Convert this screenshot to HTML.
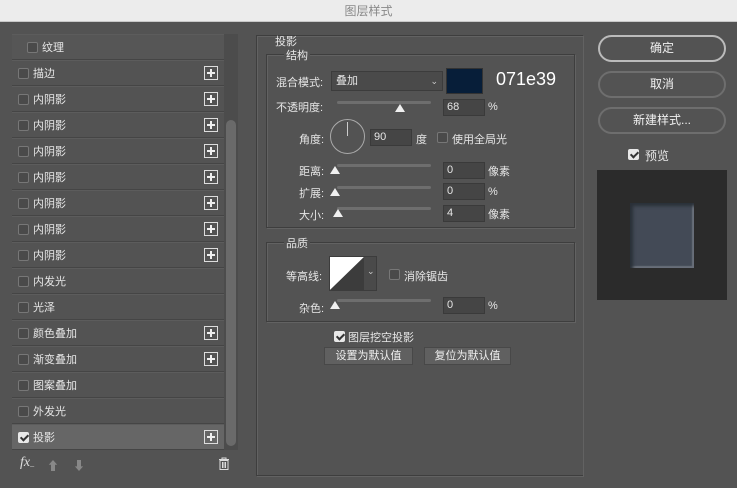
<!DOCTYPE html>
<html><head><meta charset="utf-8"><style>
*{box-sizing:border-box;margin:0;padding:0}
body{width:737px;height:488px;background:#535353;font-family:"Liberation Sans","Noto Sans CJK SC",sans-serif;font-size:11px;color:#e6e6e6;position:relative;overflow:hidden}
.a{position:absolute}
.title{left:0;top:0;width:737px;height:22px;background:#ececec;border-bottom:1px solid #c8c8c8;color:#888;text-align:center;line-height:22px;font-size:12px}
.list{left:12px;top:34px;width:212px;height:416px;background:#535353}
.row{position:absolute;left:0;width:212px;height:26px;border-bottom:1px solid #454545;border-top:1px solid #5c5c5c}
.row span{position:absolute;left:21px;top:4px}
.cb{position:absolute;width:11px;height:11px;border:1px solid #777;background:#4a4a4a;border-radius:2px}
.row .cb{left:6px;top:7px}
.plus{position:absolute;left:192px;top:5px;width:14px;height:14px;border:1px solid #ddd}
.plus:before{content:"";position:absolute;left:2px;top:5px;width:8px;height:2px;background:#eee}
.plus:after{content:"";position:absolute;left:5px;top:2px;width:2px;height:8px;background:#eee}
.chk{background:#e8e8e8;border-color:#e8e8e8}
.chk:after{content:"";position:absolute;left:3px;top:0px;width:3px;height:6px;border:solid #333;border-width:0 2px 2px 0;transform:rotate(45deg)}
.box{border:1px solid #3e3e3e;box-shadow:1px 1px 0 #626262, inset 1px 1px 0 #626262}
.inp{position:absolute;height:17px;background:#454545;border:1px solid #3a3a3a;padding-left:3px;line-height:15px;color:#e6e6e6}
.sl{position:absolute;height:3px;background:#6e6e6e;border-radius:2px;width:94px}
.th{position:absolute;width:0;height:0;border-left:5px solid transparent;border-right:5px solid transparent;border-bottom:8px solid #f0f0f0}
.lbl{position:absolute}
.btn{position:absolute;left:598px;width:128px;height:27px;border:2px solid #6e6e6e;border-radius:14px;text-align:center;line-height:23px;font-size:12px;color:#f0f0f0}
.btn2{position:absolute;height:18px;background:#606060;border:1px solid #484848;text-align:center;line-height:16px;color:#eee}
</style></head><body>
<div class="a title">图层样式</div>

<div class="a list">
<div class="row" style="top:0;background:#565656"><div class="cb" style="left:15px"></div><span style="left:30px">纹理</span></div>
<div class="row" style="top:26px"><div class="cb"></div><span>描边</span><div class="plus"></div></div>
<div class="row" style="top:52px"><div class="cb"></div><span>内阴影</span><div class="plus"></div></div>
<div class="row" style="top:78px"><div class="cb"></div><span>内阴影</span><div class="plus"></div></div>
<div class="row" style="top:104px"><div class="cb"></div><span>内阴影</span><div class="plus"></div></div>
<div class="row" style="top:130px"><div class="cb"></div><span>内阴影</span><div class="plus"></div></div>
<div class="row" style="top:156px"><div class="cb"></div><span>内阴影</span><div class="plus"></div></div>
<div class="row" style="top:182px"><div class="cb"></div><span>内阴影</span><div class="plus"></div></div>
<div class="row" style="top:208px"><div class="cb"></div><span>内阴影</span><div class="plus"></div></div>
<div class="row" style="top:234px"><div class="cb"></div><span>内发光</span></div>
<div class="row" style="top:260px"><div class="cb"></div><span>光泽</span></div>
<div class="row" style="top:286px"><div class="cb"></div><span>颜色叠加</span><div class="plus"></div></div>
<div class="row" style="top:312px"><div class="cb"></div><span>渐变叠加</span><div class="plus"></div></div>
<div class="row" style="top:338px"><div class="cb"></div><span>图案叠加</span></div>
<div class="row" style="top:364px"><div class="cb"></div><span>外发光</span></div>
<div class="row" style="top:390px;background:#666"><div class="cb chk"></div><span>投影</span><div class="plus"></div></div>
</div>
<div class="a" style="left:224px;top:34px;width:14px;height:416px;background:#4c4c4c"></div>
<div class="a" style="left:226px;top:120px;width:10px;height:326px;background:#6a6a6a;border-radius:5px"></div>
<div class="a" style="left:20px;top:455px;font-style:italic;font-size:14px;color:#ddd;font-family:'Liberation Serif',serif">fx<span style="font-size:8px">_</span></div>
<div class="a" style="left:47px;top:457px;color:#888;font-size:12px">⬆</div>
<div class="a" style="left:73px;top:457px;color:#888;font-size:12px">⬇</div>
<svg class="a" style="left:218px;top:457px" width="12" height="13" viewBox="0 0 12 13"><path d="M1 2.5h10M4 2.5V1h4v1.5M2 3.5h8v9H2z M4.5 5v6M6 5v6M7.5 5v6" stroke="#ddd" fill="none" stroke-width="1"/></svg>

<div class="a box" style="left:256px;top:35px;width:327px;height:441px;border-right:none"></div>
<div class="a" style="left:275px;top:33px">投影</div>
<div class="a box" style="left:266px;top:54px;width:309px;height:174px"></div>
<div class="a" style="left:284px;top:47px;background:#535353;padding:0 2px">结构</div>

<div class="lbl" style="left:276px;top:74px">混合模式:</div>
<div class="a" style="left:331px;top:71px;width:112px;height:20px;background:#4a4a4a;border:1px solid #3c3c3c;padding-left:4px;line-height:18px">叠加<span style="position:absolute;right:4px;top:0;font-size:9px;color:#ccc">⌄</span></div>
<div class="a" style="left:446px;top:68px;width:37px;height:26px;background:#071e39;border:1px solid #333"></div>
<div class="a" style="left:496px;top:69px;font-size:18px;color:#fff">071e39</div>

<div class="lbl" style="left:276px;top:99px">不透明度:</div>
<div class="sl" style="left:337px;top:101px"></div><div class="th" style="left:395px;top:104px"></div>
<div class="inp" style="left:443px;top:99px;width:42px">68</div><div class="lbl" style="left:488px;top:101px">%</div>

<div class="lbl" style="left:299px;top:131px">角度:</div>
<div class="a" style="left:330px;top:119px;width:35px;height:35px;border:1px solid #aaa;border-radius:50%"></div>
<div class="a" style="left:347px;top:122px;width:1px;height:14px;background:#ccc"></div>
<div class="inp" style="left:370px;top:129px;width:42px">90</div><div class="lbl" style="left:416px;top:131px">度</div>
<div class="cb" style="left:437px;top:132px"></div><div class="lbl" style="left:452px;top:131px">使用全局光</div>

<div class="lbl" style="left:299px;top:163px">距离:</div>
<div class="sl" style="left:337px;top:164px"></div><div class="th" style="left:330px;top:166px"></div>
<div class="inp" style="left:443px;top:162px;width:42px">0</div><div class="lbl" style="left:488px;top:163px">像素</div>
<div class="lbl" style="left:299px;top:185px">扩展:</div>
<div class="sl" style="left:337px;top:186px"></div><div class="th" style="left:330px;top:188px"></div>
<div class="inp" style="left:443px;top:183px;width:42px">0</div><div class="lbl" style="left:488px;top:186px">%</div>
<div class="lbl" style="left:299px;top:207px">大小:</div>
<div class="sl" style="left:337px;top:207px"></div><div class="th" style="left:333px;top:209px"></div>
<div class="inp" style="left:443px;top:205px;width:42px">4</div><div class="lbl" style="left:488px;top:206px">像素</div>

<div class="a box" style="left:266px;top:242px;width:309px;height:80px"></div>
<div class="a" style="left:284px;top:235px;background:#535353;padding:0 2px">品质</div>
<div class="lbl" style="left:286px;top:268px">等高线:</div>
<div class="a" style="left:329px;top:256px;width:48px;height:35px;border:1px solid #3c3c3c;background:#4a4a4a"></div>
<svg class="a" style="left:330px;top:257px" width="34" height="33"><polygon points="0,0 34,0 0,33" fill="#fff"/><polygon points="34,0 34,33 0,33" fill="#3c3c3c"/></svg>
<div class="a" style="left:367px;top:266px;font-size:9px;color:#ccc">⌄</div>
<div class="cb" style="left:389px;top:269px"></div><div class="lbl" style="left:404px;top:268px">消除锯齿</div>
<div class="lbl" style="left:299px;top:300px">杂色:</div>
<div class="sl" style="left:337px;top:299px"></div><div class="th" style="left:330px;top:301px"></div>
<div class="inp" style="left:443px;top:297px;width:42px">0</div><div class="lbl" style="left:488px;top:300px">%</div>

<div class="cb chk" style="left:334px;top:331px"></div><div class="lbl" style="left:348px;top:329px">图层挖空投影</div>
<div class="btn2" style="left:324px;top:347px;width:89px">设置为默认值</div>
<div class="btn2" style="left:424px;top:347px;width:87px">复位为默认值</div>

<div class="btn" style="top:35px;border-color:#bbb">确定</div>
<div class="btn" style="top:71px">取消</div>
<div class="btn" style="top:107px">新建样式...</div>
<div class="cb chk" style="left:628px;top:149px"></div><div class="lbl" style="left:645px;top:147px;font-size:12px">预览</div>
<div class="a" style="left:597px;top:170px;width:130px;height:130px;background:#2b2b2b"></div>
<div class="a" style="left:630px;top:203px;width:64px;height:65px;background:#434a56;box-shadow:inset 3px 3px 3px #2a3038, inset -2px -2px 1px #6a707a"></div>
</body></html>
